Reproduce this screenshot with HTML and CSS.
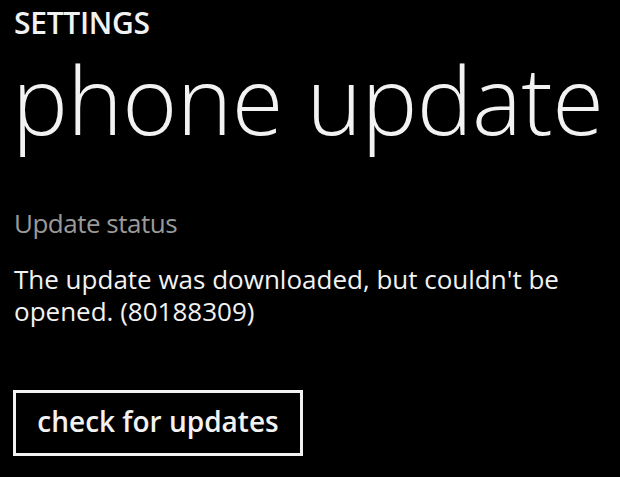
FILE: index.html
```html
<!DOCTYPE html>
<html lang="en">
<head>
<meta charset="utf-8">
<title>phone update</title>
<link rel="stylesheet" href="styles.css">
</head>
<body>
  <main class="page">
    <div class="app-title">SETTINGS</div>
    <h1 class="page-title">phone update</h1>
    <div class="label">Update status</div>
    <p class="status">The update was downloaded, but couldn't be<br>opened. (80188309)</p>
    <button class="btn" type="button">check for updates</button>
  </main>
</body>
</html>
```

FILE: styles.css
```css
html, body {
  margin: 0;
  padding: 0;
  background: #000;
}

.page {
  width: 620px;
  height: 477px;
  box-sizing: border-box;
  padding-left: 14px;
  color: #f2f2f2;
  font-family: "Open Sans", "Noto Sans", sans-serif;
  overflow: hidden;
}

.app-title {
  margin-top: 5px;
  font-size: 30px;
  line-height: 36px;
  font-weight: 600;
  letter-spacing: -0.3px;
}

.page-title {
  margin: 8px 0 0 -2px;
  font-size: 94px;
  line-height: 100px;
  font-weight: 300;
  letter-spacing: -0.6px;
}

.label {
  margin-top: 57px;
  font-size: 26px;
  line-height: 34px;
  letter-spacing: -0.5px;
  color: #9a9a9a;
}

.status {
  margin: 23px 0 0;
  font-size: 26px;
  line-height: 32px;
}

.btn {
  display: flex;
  align-items: center;
  justify-content: center;
  margin-top: 63px;
  margin-left: -1px;
  width: 290px;
  height: 66px;
  box-sizing: border-box;
  border: 3px solid #f2f2f2;
  background: #000;
  color: #f2f2f2;
  font-family: inherit;
  font-size: 28px;
  font-weight: 600;
  padding: 0 0 4px;
}
```
